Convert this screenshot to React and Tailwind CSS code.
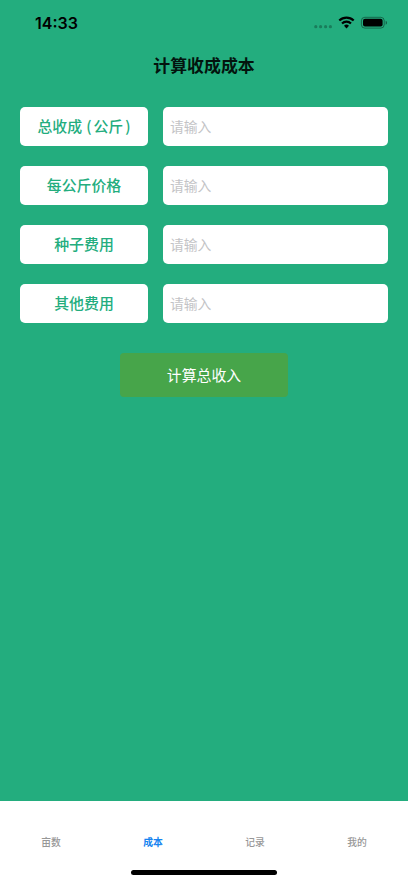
const fields = [
  { key: "harvest", label: <span className="flex items-center pl-[4px]">总收成<span className="ml-[4px] mr-[2px]">(</span>公斤<span className="ml-[2px] mr-[4px]">)</span></span> },
  { key: "price", label: "每公斤价格" },
  { key: "seeds", label: "种子费用" },
  { key: "other", label: "其他费用" },
];

const tabs = ["亩数", "成本", "记录", "我的"];

function StatusBar() {
  return (
    <header className="flex h-[45px] shrink-0 items-center justify-between pl-[35px] pr-[20px] text-black">
      <time className="font-['Inter','Liberation_Sans',sans-serif] text-[16px] font-semibold leading-5">14:33</time>
      <svg width="75" height="16" viewBox="0 0 75 16">
        <g fill="#000" fillOpacity="0.28">
          <circle cx="2.8" cy="11.7" r="1.6" />
          <circle cx="7.6" cy="11.7" r="1.6" />
          <circle cx="12.6" cy="11.7" r="1.6" />
          <circle cx="17.4" cy="11.7" r="1.6" />
        </g>
        <g fill="none" stroke="#000" strokeWidth="2.2">
          <path d="M26.3 5.5a10.4 10.4 0 0 1 14.4 0" />
          <path d="M29 8.5a6.5 6.5 0 0 1 9 0" />
        </g>
        <path d="M33.5 13.4l-2.5-2.6a3.6 3.6 0 0 1 5 0z" fill="#000" />
        <rect x="48.4" y="2.3" width="22.8" height="10.8" rx="3.4" fill="none" stroke="#000" strokeOpacity="0.4" />
        <rect x="50" y="3.8" width="19.6" height="7.8" rx="2" fill="#000" />
        <path d="M72.7 5.7c1.8.6 1.8 3.4 0 4z" fill="#000" fillOpacity="0.45" />
      </svg>
    </header>
  );
}

export default function App() {
  return (
    <div className="flex h-[883px] w-[408px] flex-col overflow-hidden bg-[#23ad7e] font-['Noto_Sans_CJK_SC',sans-serif]">
      <StatusBar />
      <h1 className="flex h-10 shrink-0 items-center justify-center text-[16.9px] font-bold leading-6 text-[#03140e]">计算收成成本</h1>
      <main className="flex flex-1 flex-col items-center px-5 pt-[21.7px]">
        <div className="flex w-full flex-col gap-[19.7px]">
          {fields.map((field) => (
            <label key={field.key} className="flex h-[39.4px] gap-[15px]">
              <span className="flex w-32 items-center justify-center whitespace-nowrap rounded-[5px] bg-white text-[14.9px] font-medium text-[#23ad7e]">{field.label}</span>
              <input
                placeholder="请输入"
                className="w-[225px] rounded-[5px] bg-white px-[7px] pb-px text-[13.8px] text-gray-700 outline-none placeholder:text-[#c3c3c6]"
              />
            </label>
          ))}
        </div>
        <button className="mt-[30px] flex h-[43.5px] w-[168px] items-center justify-center rounded-[4px] bg-[#47a54a] text-[14.9px] text-white">计算总收入</button>
      </main>
      <nav className="flex h-[82px] shrink-0 flex-col bg-white">
        <div className="flex h-[68.5px] items-end">
          {tabs.map((tab) => (
            <a key={tab} className={tab === "成本" ? "flex h-[55px] flex-1 items-center justify-center text-[9.8px] font-bold text-[#1684f0]" : "flex h-[55px] flex-1 items-center justify-center text-[9.8px] font-medium text-[#979797]"}>
              {tab}
            </a>
          ))}
        </div>
        <div className="mx-auto h-[5px] w-[146px] rounded-full bg-black" />
      </nav>
    </div>
  );
}
